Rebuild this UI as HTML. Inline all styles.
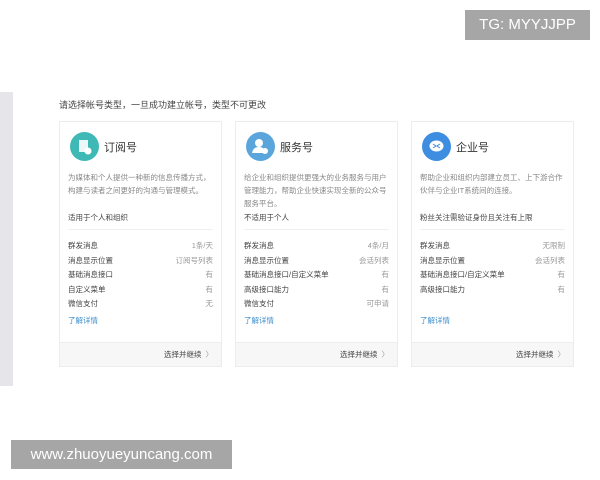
<!DOCTYPE html>
<html><head><meta charset="utf-8"><style>
*{margin:0;padding:0;box-sizing:border-box}
body{width:600px;height:480px;background:#fff;position:relative;overflow:hidden;font-family:"Liberation Sans","Noto Sans CJK SC",sans-serif;color:#333}
.bar{position:absolute;left:0;top:92px;width:13px;height:294px;background:#e6e6ea}
.hd{position:absolute;left:59px;top:98px;font-size:9px;color:#444}
.card{position:absolute;top:121px;width:163px;height:246px;border:1px solid #ececec;background:#fff}
.ic{position:absolute;left:10px;top:10px;width:29px;height:29px;border-radius:50%}
.tt{position:absolute;left:44px;top:17px;font-size:11px;color:#333}
.ds{position:absolute;left:8px;top:49px;width:146px;font-size:7.5px;line-height:13px;color:#888}
.su{position:absolute;left:8px;top:90px;font-size:7.5px;color:#444}
.ln{position:absolute;left:8px;right:8px;top:107px;border-top:1px solid #f0f0f0}
.rows{position:absolute;left:8px;right:8px;top:118px;font-size:7.5px}
.r{height:14.6px;display:flex;justify-content:space-between;color:#444}
.r span:last-child{color:#999}
.lk{position:absolute;left:8px;top:193px;font-size:7.5px;color:#3c8dcf}
.ft{position:absolute;left:0;right:0;bottom:0;height:24px;background:#f7f7f7;border-top:1px solid #eee;font-size:7.5px;text-align:right;padding-right:8px;line-height:23px;color:#444}
.ft b{font-weight:normal;color:#999;margin-left:4px}
.wm{position:absolute;background:#a6a6a6;color:#fff;font-size:15px;text-align:center}
</style></head><body>
<div class="bar"></div>
<div class="hd">请选择帐号类型，一旦成功建立帐号，类型不可更改</div>

<div class="card" style="left:59px">
<div class="ic" style="background:#3fb9b5"><svg width="29" height="29"><rect x="9" y="8" width="9" height="12" fill="#fff" opacity=".9"/><circle cx="18" cy="19" r="3.5" fill="#fff"/></svg></div>
<div class="tt">订阅号</div>
<div class="ds">为媒体和个人提供一种新的信息传播方式，构建与读者之间更好的沟通与管理模式。</div>
<div class="su">适用于个人和组织</div><div class="ln"></div>
<div class="rows">
<div class="r"><span>群发消息</span><span>1条/天</span></div>
<div class="r"><span>消息显示位置</span><span>订阅号列表</span></div>
<div class="r"><span>基础消息接口</span><span>有</span></div>
<div class="r"><span>自定义菜单</span><span>有</span></div>
<div class="r"><span>微信支付</span><span>无</span></div>
</div>
<div class="lk">了解详情</div>
<div class="ft">选择并继续<b>〉</b></div>
</div>

<div class="card" style="left:235px">
<div class="ic" style="background:#5aa6dc"><svg width="29" height="29"><circle cx="13" cy="11" r="4" fill="#fff"/><path d="M6 21q1-6 7-6t6 6z" fill="#fff"/><circle cx="19" cy="19" r="3" fill="#fff"/></svg></div>
<div class="tt">服务号</div>
<div class="ds">给企业和组织提供更强大的业务服务与用户管理能力，帮助企业快速实现全新的公众号服务平台。</div>
<div class="su">不适用于个人</div><div class="ln"></div>
<div class="rows">
<div class="r"><span>群发消息</span><span>4条/月</span></div>
<div class="r"><span>消息显示位置</span><span>会话列表</span></div>
<div class="r"><span>基础消息接口/自定义菜单</span><span>有</span></div>
<div class="r"><span>高级接口能力</span><span>有</span></div>
<div class="r"><span>微信支付</span><span>可申请</span></div>
</div>
<div class="lk">了解详情</div>
<div class="ft">选择并继续<b>〉</b></div>
</div>

<div class="card" style="left:411px">
<div class="ic" style="background:#3d8de0"><svg width="29" height="29"><ellipse cx="14.5" cy="14" rx="7" ry="5.5" fill="#fff"/><path d="M11 12l3 2-3 2M18 12l-3 2 3 2" stroke="#3d8de0" stroke-width="1" fill="none"/></svg></div>
<div class="tt">企业号</div>
<div class="ds">帮助企业和组织内部建立员工、上下游合作伙伴与企业IT系统间的连接。</div>
<div class="su">粉丝关注需验证身份且关注有上限</div><div class="ln"></div>
<div class="rows">
<div class="r"><span>群发消息</span><span>无限制</span></div>
<div class="r"><span>消息显示位置</span><span>会话列表</span></div>
<div class="r"><span>基础消息接口/自定义菜单</span><span>有</span></div>
<div class="r"><span>高级接口能力</span><span>有</span></div>
</div>
<div class="lk">了解详情</div>
<div class="ft">选择并继续<b>〉</b></div>
</div>

<div class="wm" style="left:465px;top:10px;width:125px;height:30px;line-height:30px">TG: MYYJJPP</div>
<div class="wm" style="left:11px;top:440px;width:221px;height:29px;line-height:29px">www.zhuoyueyuncang.com</div>
</body></html>
